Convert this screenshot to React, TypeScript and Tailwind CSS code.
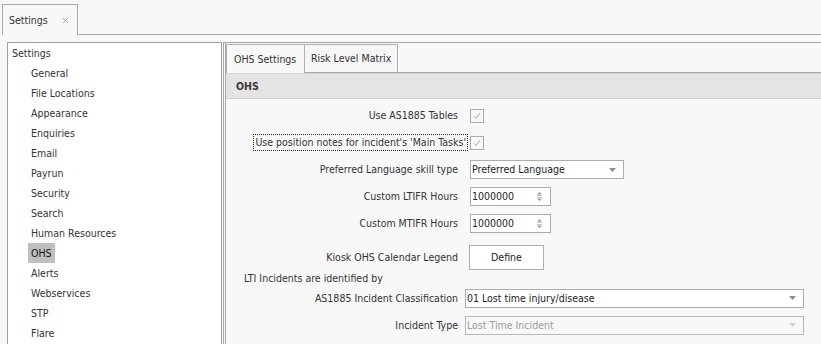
import { X } from 'lucide-react';

const navItems = [
  'General',
  'File Locations',
  'Appearance',
  'Enquiries',
  'Email',
  'Payrun',
  'Security',
  'Search',
  'Human Resources',
  'OHS',
  'Alerts',
  'Webservices',
  'STP',
  'Flare',
];

const Check = () => (
  <div className="w-[14px] h-[14px] border border-[#ababab] bg-[#f8f8f8] flex items-center justify-center">
    <svg width="10" height="10" viewBox="0 0 10 10">
      <path d="M2 5.2 L4 7.4 L8 2.2" fill="none" stroke="#a8a8a8" strokeWidth="1" />
    </svg>
  </div>
);

const DownArrow = ({ color = '#8c8c8c' }: { color?: string }) => (
  <svg width="7" height="4" viewBox="0 0 7 4">
    <path d="M0 0 H7 L3.5 4 Z" fill={color} />
  </svg>
);

const Combo = ({ value, width, disabled }: { value: string; width: string; disabled?: boolean }) => (
  <div
    className={`${width} h-[19px] border flex items-center justify-between pl-[1px] pr-[7px] ${
      disabled ? 'border-[#b9b9b9] bg-[#f8f8f8] text-[#9c9c9c]' : 'border-[#acacac] bg-white text-[#222]'
    }`}
  >
    <span>{value}</span>
    <DownArrow color={disabled ? '#d0d0d0' : '#8c8c8c'} />
  </div>
);

const Spin = ({ value }: { value: string }) => (
  <div className="w-[81px] h-[19px] border border-[#acacac] bg-white text-[#222] flex items-center justify-between pl-[1px] pr-[7px]">
    <span>{value}</span>
    <svg width="7" height="11" viewBox="0 0 7 11">
      <path d="M1 3.5 L3.5 1 L6 3.5 Z" fill="#9a9a9a" />
      <path d="M1 4.5 H6" stroke="#c8c8c8" strokeWidth="1" />
      <path d="M1 6.5 H6" stroke="#c8c8c8" strokeWidth="1" />
      <path d="M1 7.5 L3.5 10 L6 7.5 Z" fill="#9a9a9a" />
    </svg>
  </div>
);

const Row = ({ label, children, className = 'h-[27px]' }: { label: React.ReactNode; children: React.ReactNode; className?: string }) => (
  <div className={`flex items-center ${className}`}>
    <div className="w-[232px] text-right shrink-0">{label}</div>
    <div className="ml-[12px]">{children}</div>
  </div>
);

export default function App() {
  return (
    <div
      className="w-[821px] h-[344px] overflow-hidden bg-[#f8f8f8] text-[#333] text-[10.5px] leading-none"
      style={{ fontFamily: '"DejaVu Sans Condensed", "Liberation Sans", sans-serif' }}
    >
      {/* document tab strip */}
      <div className="h-[35px] flex items-end pl-[2px]">
        <div className="h-[31px] w-[76px] border-l border-t border-r border-[#a9a9a9] flex items-center pl-[6px] gap-[13px]">
          <span>Settings</span>
          <X size={9} className="text-[#8a8a8a]" strokeWidth={2} />
        </div>
        <div className="flex-1 border-b border-[#a9a9a9]" />
      </div>

      <div className="flex pl-[7px] pt-[7px]">
        {/* settings tree */}
        <div className="w-[215px] h-[320px] border border-[#a0a0a0] bg-white shrink-0">
          <div className="h-[20px] flex items-center pl-[4px]">Settings</div>
          {navItems.map((item) => (
            <div key={item} className="h-[20px] flex items-center pl-[20px]">
              <span className={`h-[20px] flex items-center px-[3px] ${item === 'OHS' ? 'bg-[#bfbfbf] text-[#111]' : ''}`}>
                {item}
              </span>
            </div>
          ))}
        </div>

        {/* right panel */}
        <div className="ml-[1px] flex-1 h-[320px] border-l border-t border-[#a8a8a8] pl-[1px]">
          <div className="h-full border-l border-[#a8a8a8]">
            <div className="h-[30px] flex items-end border-b border-[#a8a8a8]">
              <div className="h-[29px] w-[79px] border-l border-t border-r border-[#b0b0b0] bg-[#f8f8f8] -mb-px flex items-center pl-[7px]">
                OHS Settings
              </div>
              <div className="h-[28px] w-[93px] border-t border-r border-[#b0b0b0] bg-[#f6f6f6] flex items-center pl-[6px]">
                Risk Level Matrix
              </div>
            </div>

            <div className="h-[26px] bg-[#e4e4e4] border-t border-[#d6d6d6] border-b border-b-[#cfcfcf] flex items-center pl-[10px] font-bold text-[#3a3a3a]">
              OHS
            </div>

            <div className="pt-[3px]">
              <Row label="Use AS1885 Tables">
                <Check />
              </Row>
              <Row
                label={
                  <span className="inline-block -mr-[10px] border border-dotted border-[#222] px-[1px] py-[2px]">
                    Use position notes for incident's 'Main Tasks'
                  </span>
                }
              >
                <Check />
              </Row>
              <Row label="Preferred Language skill type">
                <Combo value="Preferred Language" width="w-[154px]" />
              </Row>
              <Row label="Custom LTIFR Hours">
                <Spin value="1000000" />
              </Row>
              <Row label="Custom MTIFR Hours">
                <Spin value="1000000" />
              </Row>
              <Row label="Kiosk OHS Calendar Legend" className="h-[26px] mt-[7px]">
                <div className="-ml-px w-[75px] h-[25px] border border-[#acacac] bg-white flex items-center justify-center text-[#222]">
                  Define
                </div>
              </Row>
              <div className="h-[16px] flex items-center pl-[18px]">LTI Incidents are identified by</div>
              <div className="flex items-center h-[22px] mt-[1px]">
                <div className="w-[232px] text-right shrink-0">AS1885 Incident Classification</div>
                <div className="ml-[7px]">
                  <Combo value="01 Lost time injury/disease" width="w-[339px]" />
                </div>
              </div>
              <div className="flex items-center h-[22px] mt-[5px]">
                <div className="w-[232px] text-right shrink-0">Incident Type</div>
                <div className="ml-[7px]">
                  <Combo value="Lost Time Incident" width="w-[339px]" disabled />
                </div>
              </div>
            </div>
          </div>
        </div>
      </div>
    </div>
  );
}
